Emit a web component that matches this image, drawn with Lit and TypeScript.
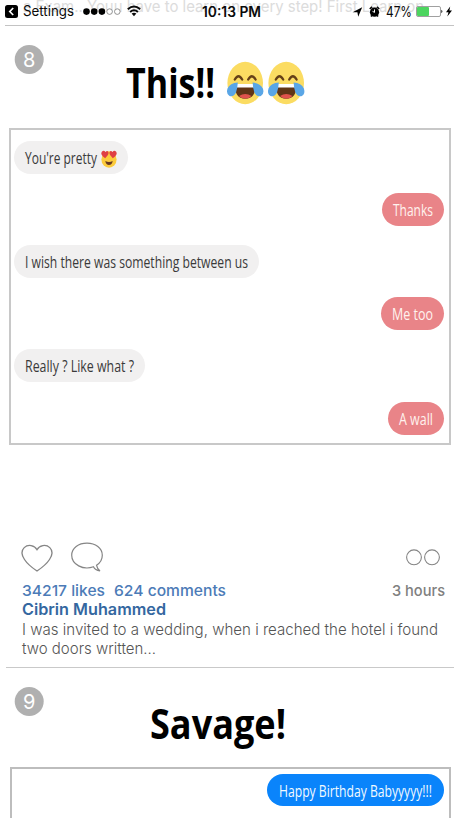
import { LitElement, html, css } from "lit";
import { customElement, property } from "lit/decorators.js";

/** One line of text condensed or widened to a fixed measure. */
const line = (text: string, width: number, cls: string, height = 20, baseline = 15) => html`
  <svg class="line ${cls}" width=${width} height=${height}>
    <text x="0" y=${baseline} textLength=${width} lengthAdjust="spacingAndGlyphs">${text}</text>
  </svg>`;

const lineStyles = css`
  svg { display: block; flex: none; overflow: visible; }
  .line text { fill: currentColor; white-space: pre; }
`;

@customElement("status-bar")
class StatusBar extends LitElement {
  static styles = [lineStyles, css`
    :host { display: block; position: relative; height: 26px; }
    .bar { display: flex; height: 25px; margin: 0 6px 0 5px; border-bottom: 1px solid #c3c3c3; }
    .under { position: absolute; left: 23px; top: 0; color: #dcdcdc; font: 400 16px Inter, "Liberation Sans", sans-serif; }
    .bar > svg { position: relative; color: #0a0a0a; }
    .label { font: 400 14px Inter, sans-serif; margin-left: 5px; }
    .dots { margin-left: 9px; }
    .wifi { margin-left: 6px; }
    .time { font: 600 14px Inter, sans-serif; margin-left: 61px; }
    .arrow { margin-left: 92px; }
    .alarm { margin-left: 7px; }
    .pct { font: 400 14.5px Inter, sans-serif; margin-left: 6px; }
    .battery { margin-left: 4px; }
    .bolt { margin-left: 3px; }
  `];
  render() {
    return html`
      <div class="under">${line("a Exam.. Youu have to learn on every step! First Learn on", 401, "ghost", 20, 12)}</div>
      <div class="bar">
        <svg width="13" height="25"><rect y="5" width="13" height="13" rx="2.5"/><path d="M8.2 8 4.8 11.5 8.2 15" fill="none" stroke="#fff" stroke-width="1.7"/></svg>
        ${line("Settings", 51, "label", 25, 16)}
        <svg class="dots" width="38" height="25">
          <circle cx="3.5" cy="11.6" r="3.3"/><circle cx="11.2" cy="11.6" r="3.3"/><circle cx="18.9" cy="11.6" r="3.3"/>
          <circle cx="26.6" cy="11.6" r="2.8" fill="#fff" stroke="#777" stroke-width=".8"/><circle cx="34.3" cy="11.6" r="2.8" fill="#fff" stroke="#777" stroke-width=".8"/>
        </svg>
        <svg class="wifi" width="14" height="25" fill="none" stroke="#0a0a0a" stroke-width="2"><path d="M.8 9.2Q7 3.7 13.2 9.2M3.1 12Q7 8.6 10.9 12"/><path d="M7 16.2 4.6 13.6Q7 11.8 9.4 13.6Z" fill="#0a0a0a" stroke="none"/></svg>
        ${line("10:13 PM", 59, "time", 25, 17)}
        <svg class="arrow" width="9" height="25"><path d="M9.2 7.2 5.2 16.8 4.4 12.2H-.4Z"/></svg>
        <svg class="alarm" width="11" height="25">
          <circle cx="5.5" cy="12.2" r="4.6"/><path d="M.8 9 3 6.8M10.2 9 8 6.8M2 16.6 3 15.3M9 16.6 8 15.3" stroke="#0a0a0a" stroke-width="1.7"/>
          <path d="M5.5 9.4V12.4L3.5 11.3" fill="none" stroke="#fff" stroke-width="1"/>
        </svg>
        ${line("47%", 26, "pct", 25, 17)}
        <svg class="battery" width="27" height="25">
          <rect x=".5" y="6.5" width="24" height="10" rx="1.5" fill="#fff" stroke="#888" stroke-width=".8"/>
          <rect x="1" y="7" width="12" height="9" rx="1" fill="#4cd55f"/><path d="M25.4 9.8Q27.4 11.5 25.4 13.2Z"/>
        </svg>
        <svg class="bolt" width="6" height="25"><path d="M4.2 6.5 0 12.2H2.5L1.3 16.5 6 10.6H3.4Z"/></svg>
      </div>`;
  }
}

@customElement("chat-bubble")
class ChatBubble extends LitElement {
  @property() text = "";
  @property({ type: Number }) measure = 0;
  @property() kind = "in";
  @property({ type: Boolean }) love = false;
  static styles = [lineStyles, css`
    :host { display: block; }
    .bubble { display: flex; box-sizing: border-box; height: 33px; width: max-content; padding: 0 11px; border-radius: 16.5px; font: 400 15.5px "Open Sans", "Noto Sans", sans-serif; }
    .in { background: #f1f0f0; color: #3a3a3a; }
    .out { background: #e98488; color: #fff2ee; margin-left: auto; }
    .blue { background: #0a84fb; color: #f2faff; margin-left: auto; height: 32px; padding: 0 12px; }
    .face { margin: 9px 0 0 4px; }
  `];
  render() {
    return html`<div class="bubble ${this.kind}">
      ${line(this.text, this.measure, "msg", 33, this.kind === "blue" ? 22.5 : 22.8)}
      ${this.love ? html`<svg class="face" width="16" height="18" viewBox="0 0 16 18">
        <ellipse cx="8" cy="9.5" rx="7.6" ry="8.3" fill="#fccb3c"/>
        <path d="M4.2 8.2Q-1.2 4.5.8 1.7 3-.2 4.4 2.1 7-.2 7.6 2.8 7.6 5 4.2 8.2ZM11.8 8.2Q8.4 5 8.4 2.8 9-.2 11.6 2.1 13-.2 15.2 1.7 17.2 4.5 11.8 8.2Z" fill="#df3f44"/>
        <path d="M4.3 10.9Q8 13 11.7 10.9 11 14.9 8 14.9 5 14.9 4.3 10.9Z" fill="#673923"/>
      </svg>` : ""}
    </div>`;
  }
}

const tearsOfJoy = html`
  <svg class="joy" width="41" height="44" viewBox="0 0 41 44">
    <ellipse cx="20.2" cy="22" rx="17.8" ry="21.2" fill="#fbdc62"/>
    <path d="M9.8 18.5Q13.5 12 17.2 18.5M23.2 18.5Q26.9 12 30.6 18.5" fill="none" stroke="#654018" stroke-width="2.3" stroke-linecap="round"/>
    <path d="M10 23H30.5Q31 37.8 20.2 37.8 9.5 37.8 10 23Z" fill="#603516"/>
    <path d="M10.5 23H30V26.5H10.5Z" fill="#fff"/>
    <path d="M14 35Q20.2 31 26.5 35 24 37.8 20.2 37.8 16.5 37.8 14 35Z" fill="#e0534c"/>
    <path d="M12.8 21.5Q5 22 2.5 27.5.8 33 4.5 35 9 36 11 31.5 12.5 27 12.8 21.5ZM27.6 21.5Q35.4 22 37.9 27.5 39.6 33 35.9 35 31.4 36 29.4 31.5 27.9 27 27.6 21.5Z" fill="#5aa6e6"/>
  </svg>`;

@customElement("app-root")
class AppRoot extends LitElement {
  static styles = [lineStyles, css`
    :host { display: block; height: 818px; overflow: hidden; background: #fff; font-family: Inter, "Liberation Sans", sans-serif; }
    .head { display: flex; padding-left: 15px; }
    .first { height: 102px; }
    .second { height: 99px; }
    .badge { font: 400 20px Inter, sans-serif; margin-top: 19px; }
    .title { font: 700 41px "Open Sans", "Noto Sans", sans-serif; color: #000; }
    .this { margin-left: 82px; }
    .savage { margin-left: 106px; }
    .joy { margin-top: 35px; }
    .this + .joy { margin-left: 10px; }
    .panel { box-sizing: border-box; border: 2px solid #c8c8c8; }
    .chat { display: flex; flex-direction: column; gap: 19.2px; margin-left: 9px; width: 442px; height: 317px; padding: 10.6px 5px 0 3px; }
    .next { margin-left: 10px; width: 441px; height: 60px; padding: 5px 5px 0; border-color: #bdbdbd; }
    .actions { display: flex; height: 31px; margin-top: 96px; padding: 0 20px 0 21px; }
    .talk { margin-left: 18px; }
    .more { margin-left: auto; }
    .meta { display: flex; height: 19px; padding: 0 15px 0 22px; font-size: 15px; font-weight: 500; color: #4c7bb7; margin-top: 9px; }
    .comments { margin-left: 9px; }
    .ago { margin-left: auto; color: #808080; }
    .copy { padding-left: 22px; }
    .name { font-size: 16px; font-weight: 600; color: #3467a0; }
    .body { font-size: 15.5px; font-weight: 350; color: #555; }
    .rule { height: 1px; margin: 9px 6px 0; background: #c9c9c9; }
  `];

  private badge(n: string) {
    return html`<svg class="badge" width="29" height="30"><circle cx="14.2" cy="14.5" r="14.5" fill="#b0b0b0"/><text x="14.3" y="21.7" text-anchor="middle" fill="#fff">${n}</text></svg>`;
  }

  render() {
    return html`
      <status-bar></status-bar>
      <header class="head first">
        ${this.badge("8")}
        ${line("This!!", 89, "title this", 60, 72)}
        ${tearsOfJoy}${tearsOfJoy}
      </header>
      <section class="panel chat">
        <chat-bubble text="You're pretty" measure="72" love></chat-bubble>
        <chat-bubble text="Thanks" measure="40" kind="out"></chat-bubble>
        <chat-bubble text="I wish there was something between us" measure="223"></chat-bubble>
        <chat-bubble text="Me too" measure="41" kind="out"></chat-bubble>
        <chat-bubble text="Really ? Like what ?" measure="109"></chat-bubble>
        <chat-bubble text="A wall" measure="34" kind="out"></chat-bubble>
      </section>
      <div class="actions">
        <svg width="32" height="31" fill="none" stroke="#858585" stroke-width="1.3"><path d="M16 30Q7 24 3.5 18.5C.5 14 .3 9.5 3.2 6.600 7 3 13.500 4 16 8.700 18.500 4 25 3 28.800 6.600 31.700 9.500 31.500 14 28.500 18.500Q25 24 16 30Z"/></svg>
        <svg class="talk" width="32" height="31" fill="none" stroke="#858585" stroke-width="1.2"><path d="M22.500 25.800C12 29.500.7 23.500.7 14.300.7 7 7.500 2.200 16 2.200S31.300 7.200 31.300 14.200C31.300 18.500 29 22 25.500 24.200 26 27 27.300 28.700 29 30 26 29.500 23.500 28 22.500 25.800Z"/></svg>
        <svg class="more" width="34" height="31" fill="none" stroke="#858585" stroke-width="1.1"><circle cx="8" cy="16.300" r="7.400"/><circle cx="26" cy="16.300" r="7.400"/></svg>
      </div>
      <div class="meta">
        ${line("34217 likes", 83, "likes")}
        ${line("624 comments", 112, "comments")}
        ${line("3 hours", 53, "ago")}
      </div>
      <div class="copy">
        ${line("Cibrin Muhammed", 144, "name", 20, 15)}
        ${line("I was invited to a wedding, when i reached the hotel i found", 416, "body", 19, 15)}
        ${line("two doors written...", 134, "body", 19, 15)}
      </div>
      <div class="rule"></div>
      <header class="head second">
        ${this.badge("9")}
        ${line("Savage!", 136, "title savage", 60, 71)}
      </header>
      <section class="panel next">
        <chat-bubble text="Happy Birthday Babyyyyy!!!" measure="153" kind="blue"></chat-bubble>
      </section>`;
  }
}
